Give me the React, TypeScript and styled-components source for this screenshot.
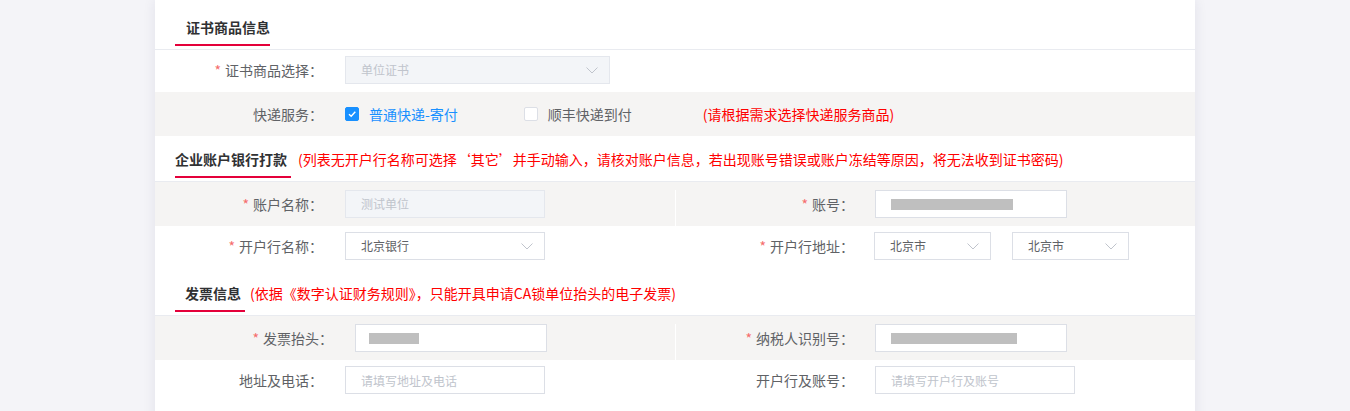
import React from "react";
import styled, { createGlobalStyle } from "styled-components";

const Global = createGlobalStyle`
  html, body { margin: 0; padding: 0; background: #f4f4f8; }
  body { font-family: "Noto Sans CJK SC", "Noto Sans", sans-serif; }
  * { box-sizing: border-box; }
`;

const Card = styled.div`
  width: 1040px;
  min-height: 411px;
  margin: 0 auto;
  padding: 4px 0 20px;
  background: #fff;
  box-shadow: 0 0 12px rgba(30, 30, 90, 0.09);
`;

const SectionHeader = styled.div`
  display: flex;
  align-items: flex-end;
  height: 46px;
  padding: 0 20px 3px;
  border-bottom: 1px solid #e9ebf0;
`;

const Tab = styled.div<{ $pl: number; $pr: number }>`
  padding: 0 ${(p) => p.$pr}px 7px ${(p) => p.$pl}px;
  border-bottom: 2px solid #e4003a;
  font-size: 14px;
  line-height: 20px;
  font-weight: 700;
  color: #303133;
  white-space: nowrap;
`;

const Note = styled.span<{ $ml: number; $mb?: number }>`
  margin: 0 0 ${(p) => p.$mb ?? 9}px ${(p) => p.$ml}px;
  font-size: 14px;
  line-height: 20px;
  color: #ff0000;
  white-space: nowrap;
`;

const Field = styled.div<{ $divider?: boolean }>`
  display: flex;
  align-items: center;
  flex: 0 0 520px;
  border-left: ${(p) => (p.$divider ? "1px solid #ffffff" : "none")};
`;

const Row = styled.div<{ $grey?: boolean; $first?: boolean }>`
  display: flex;
  align-items: stretch;
  background: ${(p) => (p.$grey ? "#f5f4f3" : "#ffffff")};
  padding-top: ${(p) => (p.$grey ? 8 : 6)}px;
  & > ${Field} {
    padding-bottom: ${(p) => (p.$grey || p.$first ? 8 : 10)}px;
  }
`;

const CheckRow = styled.div`
  display: flex;
  align-items: center;
  height: 44px;
  background: #f5f4f3;
`;

const Label = styled.div<{ $w: number; $mr: number }>`
  flex: 0 0 ${(p) => p.$w}px;
  margin-right: ${(p) => p.$mr}px;
  text-align: right;
  font-size: 14px;
  line-height: 20px;
  color: #606266;
  white-space: nowrap;
`;

const Req = styled.span`
  color: #f56c6c;
  margin-right: 4px;
`;

const Box = styled.div<{ $w: number; $disabled?: boolean; $pl?: number }>`
  display: flex;
  align-items: center;
  justify-content: space-between;
  width: ${(p) => p.$w}px;
  height: 28px;
  padding: 0 11px 0 ${(p) => p.$pl ?? 15}px;
  border: 1px solid ${(p) => (p.$disabled ? "#e4e7ed" : "#dcdfe6")};
  background: ${(p) => (p.$disabled ? "#f3f5f8" : "#ffffff")};
  font-size: 12px;
  line-height: 16px;
  color: ${(p) => (p.$disabled ? "#c0c4cc" : "#606266")};
  white-space: nowrap;
`;

const TextInput = styled.input<{ $w: number }>`
  width: ${(p) => p.$w}px;
  height: 28px;
  padding: 0 15px;
  border: 1px solid #dcdfe6;
  border-radius: 0;
  background: #fff;
  font-family: "Noto Sans CJK SC", "Noto Sans", sans-serif;
  font-size: 12px;
  color: #606266;
  outline: none;
  &::placeholder {
    color: #c0c4cc;
  }
`;

const Redacted = styled.span<{ $w: number }>`
  display: inline-block;
  width: ${(p) => p.$w}px;
  height: 11px;
  background: #bfbfbf;
`;

const SelectGroup = styled.div`
  display: flex;
  gap: 21px;
  margin-left: -1px;
`;

const CheckItem = styled.label<{ $on?: boolean; $mr?: number }>`
  display: flex;
  align-items: center;
  gap: 10px;
  margin-right: ${(p) => p.$mr ?? 0}px;
  font-size: 14px;
  line-height: 20px;
  color: ${(p) => (p.$on ? "#1890ff" : "#606266")};
  white-space: nowrap;
`;

const CheckBoxMark = styled.span<{ $on?: boolean }>`
  display: inline-flex;
  align-items: center;
  justify-content: center;
  width: 14px;
  height: 14px;
  border: 1px solid ${(p) => (p.$on ? "#1890ff" : "#dcdfe6")};
  border-radius: 2px;
  background: ${(p) => (p.$on ? "#1890ff" : "#ffffff")};
`;

const Chevron = () => (
  <svg width="12" height="7" viewBox="0 0 12 7" fill="none">
    <polyline points="0.5,0.5 6,6 11.5,0.5" stroke="#c0c4cc" strokeWidth="1" />
  </svg>
);

const Tick = () => (
  <svg width="10" height="10" viewBox="0 0 10 10" fill="none">
    <polyline points="2,5.2 4.2,7.3 8.3,2.8" stroke="#ffffff" strokeWidth="1.4" />
  </svg>
);

const Select = ({ w, value, disabled }: { w: number; value: string; disabled?: boolean }) => (
  <Box $w={w} $disabled={disabled}>
    <span>{value}</span>
    <Chevron />
  </Box>
);

const L = ({
  children,
  req,
  right,
  shift = 0,
}: {
  children: React.ReactNode;
  req?: boolean;
  right?: boolean;
  shift?: number;
}) => (
  <Label $w={(right ? 178 : 168) + shift} $mr={right ? 21 : 22}>
    {req && <Req>*</Req>}
    {children}
  </Label>
);

export default function App() {
  return (
    <>
      <Global />
      <Card>
        <SectionHeader>
          <Tab $pl={11} $pr={0}>证书商品信息</Tab>
        </SectionHeader>
        <Row $first>
          <Field>
            <L req>证书商品选择：</L>
            <Select w={265} value="单位证书" disabled />
          </Field>
        </Row>
        <CheckRow>
          <L>快递服务：</L>
          <CheckItem $on $mr={66}>
            <CheckBoxMark $on>
              <Tick />
            </CheckBoxMark>
            普通快递-寄付
          </CheckItem>
          <CheckItem>
            <CheckBoxMark />
            顺丰快递到付
          </CheckItem>
          <Note $ml={71} $mb={0}>(请根据需求选择快递服务商品)</Note>
        </CheckRow>

        <SectionHeader>
          <Tab $pl={0} $pr={4}>企业账户银行打款</Tab>
          <Note $ml={7}>
            (列表无开户行名称可选择‘其它’并手动输入，请核对账户信息，若出现账号错误或账户冻结等原因，将无法收到证书密码)
          </Note>
        </SectionHeader>
        <Row $grey>
          <Field>
            <L req>账户名称：</L>
            <Box $w={200} $disabled>
              <span>测试单位</span>
            </Box>
          </Field>
          <Field $divider>
            <L req right>账号：</L>
            <Box $w={192}>
              <Redacted $w={122} />
            </Box>
          </Field>
        </Row>
        <Row>
          <Field>
            <L req>开户行名称：</L>
            <Select w={200} value="北京银行" />
          </Field>
          <Field $divider>
            <L req right>开户行地址：</L>
            <SelectGroup>
              <Select w={117} value="北京市" />
              <Select w={117} value="北京市" />
            </SelectGroup>
          </Field>
        </Row>

        <SectionHeader>
          <Tab $pl={10} $pr={4}>发票信息</Tab>
          <Note $ml={5}>(依据《数字认证财务规则》，只能开具申请CA锁单位抬头的电子发票)</Note>
        </SectionHeader>
        <Row $grey>
          <Field>
            <L req shift={10}>发票抬头：</L>
            <Box $w={192} $pl={13}>
              <Redacted $w={50} />
            </Box>
          </Field>
          <Field $divider>
            <L req right>纳税人识别号：</L>
            <Box $w={192}>
              <Redacted $w={126} />
            </Box>
          </Field>
        </Row>
        <Row>
          <Field>
            <L>地址及电话：</L>
            <TextInput $w={200} readOnly placeholder="请填写地址及电话" />
          </Field>
          <Field $divider>
            <L right>开户行及账号：</L>
            <TextInput $w={200} readOnly placeholder="请填写开户行及账号" />
          </Field>
        </Row>
      </Card>
    </>
  );
}
